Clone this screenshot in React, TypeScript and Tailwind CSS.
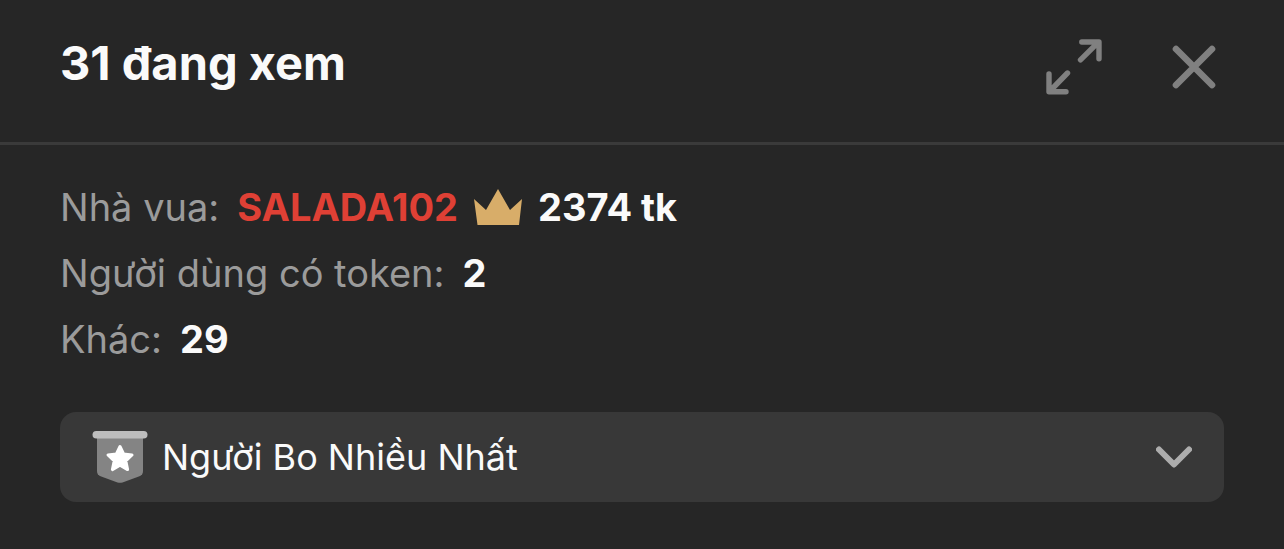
import { useState } from "react";

const stats = [
    { id: "tokens", label: "Người dùng có token:", value: "2" },
    { id: "others", label: "Khác:", value: "29" },
];

const rankings = [
    { id: "top", label: "Người Bo Nhiều Nhất" },
];

function ExpandIcon() {
    return (
        <svg className="w-14 h-14" viewBox="0 0 56 56" fill="none" stroke="currentColor" strokeWidth={5.4} strokeLinecap="round" strokeLinejoin="round" aria-hidden="true">
            <path d="M34.500 20.800 52.500 3M35.800 3H53V19.800" />
            <path d="M21.500 34 3.500 52.500M3 35V52.800H20" />
        </svg>
    );
}

function CloseIcon() {
    return (
        <svg className="w-11 h-11" viewBox="0 0 44 44" fill="none" stroke="currentColor" strokeWidth={6.6} strokeLinecap="round" aria-hidden="true">
            <path d="M4 4 40 40M40 4 4 40" />
        </svg>
    );
}

function CrownIcon() {
    return (
        <svg className="w-12 h-9" viewBox="0 0 48 36" fill="#d8ad69" aria-hidden="true">
            <path d="M0 10 12 21 24 0 36 21 48 10 45 36H3.5Z" />
        </svg>
    );
}

function BadgeIcon() {
    return (
        <svg className="w-14 h-[54px]" viewBox="0 0 56 54" aria-hidden="true">
            <path d="M5 5H51V41Q51 44.800 47.500 46.200L30.500 52.400Q28 53.300 25.500 52.400L8.500 46.200Q5 44.800 5 41Z" fill="#848484" />
            <rect x="0.500" y="1" width="55" height="7.600" rx="3.800" fill="#bdbdbd" />
            <path
                d="M28 16.500 31.600 24 40 25 33.800 30.800 35.600 39.600 28 35.200 20.400 39.600 22.200 30.800 16 25 24.400 24Z"
                fill="#fff"
                stroke="#fff"
                strokeWidth={3}
                strokeLinejoin="round"
            />
        </svg>
    );
}

function ChevronIcon() {
    return (
        <svg className="w-9 h-6" viewBox="0 0 36 24" fill="none" stroke="#adadad" strokeWidth={6} strokeLinecap="round" strokeLinejoin="round" aria-hidden="true">
            <path d="M3 4.500 18 19.500 33 4.500" />
        </svg>
    );
}

export default function App() {
    const [ranking, setRanking] = useState("top");

    return (
        <div className="min-h-screen bg-[#262626] font-['Inter',sans-serif] text-[#fafafa]">
            {/* Header */}
            <header className="flex items-start justify-between px-[60px] pt-[33px] pb-[41px] border-b-3 border-[#3a3a3a]">
                <h1 className="text-[47px] leading-[60px] font-bold">31 đang xem</h1>
                <div className="flex items-center gap-[70px] h-[68px] pr-2 text-[#808080]">
                    <button type="button" aria-label="Mở rộng" className="cursor-pointer">
                        <ExpandIcon />
                    </button>
                    <button type="button" aria-label="Đóng" className="cursor-pointer">
                        <CloseIcon />
                    </button>
                </div>
            </header>

            <main className="px-[60px] pt-[29px] pb-11">
                {/* Viewer stats */}
                <dl className="text-[38px] leading-[66px]">
                    <div className="flex items-center gap-[18px]">
                        <dt className="text-[#9b9b9b]">Nhà vua:</dt>
                        <dd className="flex items-center gap-4 font-bold">
                            <a href="#salada102" className="text-[#df4035]">SALADA102</a>
                            <CrownIcon />
                            <span>2374 tk</span>
                        </dd>
                    </div>
                    {stats.map((stat) => (
                        <div key={stat.id} className="flex items-center gap-[18px]">
                            <dt className="text-[#9b9b9b]">{stat.label}</dt>
                            <dd className="font-bold">{stat.value}</dd>
                        </div>
                    ))}
                </dl>

                {/* Ranking picker */}
                <div className="relative mt-10">
                    <select
                        aria-label="Bảng xếp hạng"
                        value={ranking}
                        onChange={(e) => setRanking(e.target.value)}
                        className="block w-full h-[90px] pl-[102px] pr-20 appearance-none rounded-2xl bg-[#383838] text-4xl leading-[60px] text-[#fafafa] cursor-pointer"
                    >
                        {rankings.map((item) => (
                            <option key={item.id} value={item.id}>{item.label}</option>
                        ))}
                    </select>
                    <div className="absolute inset-0 flex items-center justify-between px-8 pointer-events-none">
                        <BadgeIcon />
                        <ChevronIcon />
                    </div>
                </div>
            </main>
        </div>
    );
}
